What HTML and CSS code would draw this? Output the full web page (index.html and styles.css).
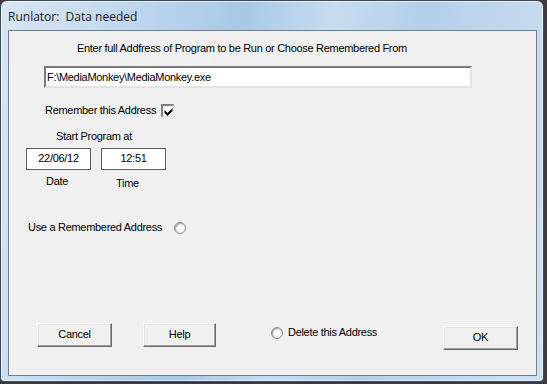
FILE: index.html
```html
<!DOCTYPE html>
<html>
<head>
<meta charset="utf-8">
<link rel="stylesheet" href="styles.css">
</head>
<body>
<div class="window">
  <div class="titlebar"><span class="title">Runlator:&nbsp; Data needed</span></div>
  <div class="client">
    <div class="heading">Enter full Addfress of Program to be Run or Choose Remembered From</div>
    <div class="pathbox">F:\MediaMonkey\MediaMonkey.exe</div>
    <div class="remember">
      <span>Remember this Address</span>
      <span class="checkbox"><svg width="9" height="9" viewBox="0 0 9 9"><path d="M0.5 3 L3.5 6 L8.5 1 L8.5 4 L3.5 9 L0.5 6 Z" fill="#000"/></svg></span>
    </div>
    <div class="startlabel">Start Program at</div>
    <div class="datetime">
      <div class="dtbox datebox">22/06/12</div>
      <div class="dtbox timebox">12:51</div>
    </div>
    <div class="dtlabels">
      <span class="datelabel">Date</span>
      <span class="timelabel">Time</span>
    </div>
    <div class="useremembered">
      <span>Use a Remembered Address</span>
      <span class="radio"></span>
    </div>
    <div class="bottomrow">
      <div class="btn cancel">Cancel</div>
      <div class="btn help">Help</div>
      <div class="delete"><span class="radio"></span><span>Delete this Address</span></div>
      <div class="btn ok">OK</div>
    </div>
  </div>
</div>
</body>
</html>
```
FILE: styles.css
```css
html, body {
  margin: 0;
  padding: 0;
}
body {
  width: 547px;
  height: 384px;
  background: #3d3a44;
  overflow: hidden;
}
.window {
  width: 542px;
  height: 380px;
  border: 1px solid #3a4b5e;
  border-radius: 7px 7px 4px 4px;
  background: linear-gradient(100deg, #d9e6f3 0%, #c2d8ee 20%, #a9c8e6 40%, #c6dcf0 55%, #b5cfe9 70%, #cfe1f2 100%);
  display: flex;
  flex-direction: column;
  box-shadow: inset 0 0 0 1px rgba(255,255,255,0.6);
}
.titlebar {
  height: 29px;
  display: flex;
  align-items: center;
  padding-left: 7px;
  box-sizing: border-box;
  padding-top: 2px;
}
.title {
  font-family: "Open Sans", "DejaVu Sans", sans-serif;
  font-size: 12px;
  color: #1a1a2a;
}
.client {
  margin: 0 6px 0 7px;
  height: 346px;
  box-sizing: border-box;
  border: 1px solid #6f7f92;
  background: #f0f0f0;
  font-family: "Liberation Sans", Arial, sans-serif;
  font-size: 11px;
  letter-spacing: -0.3px;
  color: #000;
  display: flex;
  flex-direction: column;
  line-height: 13px;
}
.heading {
  margin: 11px 0 0 68px;
}
.pathbox {
  margin: 11px 0 0 35px;
  width: 428px;
  height: 22px;
  box-sizing: border-box;
  background: #fff;
  border-top: 2px solid #7a7a7a;
  border-left: 2px solid #7a7a7a;
  border-right: 2px solid #e3e3e3;
  border-bottom: 2px solid #e3e3e3;
  padding: 3px 0 0 1px;
}
.remember {
  margin: 16px 0 0 36px;
  display: flex;
  align-items: center;
  gap: 5px;
}
.checkbox {
  width: 13px;
  height: 13px;
  box-sizing: border-box;
  background: #fff;
  border-top: 2px solid #808080;
  border-left: 2px solid #808080;
  border-right: 1px solid #dcdcdc;
  border-bottom: 1px solid #dcdcdc;
  display: flex;
  align-items: center;
  justify-content: center;
}
.startlabel {
  margin: 13px 0 0 47px;
}
.datetime {
  margin: 5px 0 0 17px;
  display: flex;
  gap: 10px;
}
.dtbox {
  height: 22px;
  box-sizing: border-box;
  border: 1px solid #5e5e5e;
  background: #fff;
  text-align: center;
  padding-top: 3px;
}
.datebox { width: 65px; }
.timebox { width: 65px; }
.dtlabels {
  margin: 5px 0 0 37px;
  display: flex;
}
.timelabel {
  margin-left: 48px;
  margin-top: 2px;
}
.useremembered {
  margin: 31px 0 0 19px;
  display: flex;
  align-items: center;
  gap: 12px;
}
.radio {
  width: 12px;
  height: 12px;
  box-sizing: border-box;
  border-radius: 50%;
  border: 1px solid #8a8a8a;
  background: radial-gradient(circle at 55% 55%, #ffffff 0%, #f4f4f4 55%, #d8d8d8 100%);
  box-shadow: inset 1px 1px 1px #a8a8a8;
  display: inline-block;
}
.bottomrow {
  margin: 89px 0 0 28px;
  display: flex;
  align-items: flex-start;
}
.btn {
  width: 75px;
  height: 24px;
  box-sizing: border-box;
  background: #f0f0f0;
  border-top: 1px solid #ffffff;
  border-left: 1px solid #ffffff;
  border-right: 1px solid #696969;
  border-bottom: 1px solid #696969;
  box-shadow: inset -1px -1px 0 #a0a0a0, inset 1px 1px 0 #e3e3e3;
  text-align: center;
  line-height: 21px;
}
.help {
  margin-left: 31px;
  width: 73px;
}
.delete {
  margin: 3px 0 0 55px;
  display: flex;
  align-items: center;
  gap: 5px;
  width: 172px;
}
.ok {
  margin-top: 3px;
}
```
